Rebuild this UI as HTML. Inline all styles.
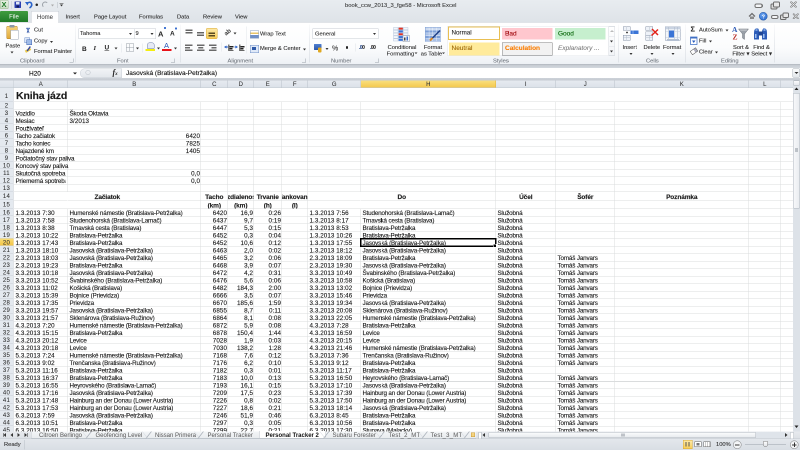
<!DOCTYPE html>
<html><head><meta charset="utf-8"><title>Excel</title>
<style>
html,body{margin:0;padding:0;width:800px;height:450px;overflow:hidden;background:#fff}
#root{position:absolute;left:0;top:0;width:1600px;height:900px;transform:scale(0.5);will-change:transform;transform-origin:0 0;overflow:hidden;background:#fff;font-family:"Liberation Sans",sans-serif;color:#000}
.a{position:absolute}
/* title + tabs */
#top{position:absolute;left:0;top:0;width:1600px;height:44px;background:linear-gradient(#e8ecf0,#dee3e8)}
#title{position:absolute;left:690px;top:3px;font-size:11.7px;color:#333;white-space:nowrap;-webkit-text-stroke:0.15px #333}
.tab{position:absolute;top:27px;font-size:11.5px;color:#2b2b2b;white-space:nowrap;-webkit-text-stroke:0.2px #2b2b2b}
#filetab{position:absolute;left:0;top:22px;width:56px;height:22px;background:linear-gradient(#3f9c3f,#1f7a28);color:#fff;font-size:12px;text-align:center;line-height:23px;border-radius:2px 2px 0 0}
#hometab{position:absolute;left:62px;top:22px;width:54px;height:23px;background:linear-gradient(#fdfdfe,#ffffff);border:1px solid #c3c9d1;border-bottom:none;border-radius:3px 3px 0 0;font-size:12px;color:#333;text-align:center;line-height:23px;z-index:2}
/* ribbon */
#ribbon{position:absolute;left:0;top:44px;width:1600px;height:84px;background:linear-gradient(#ffffff 0%,#fbfcfd 60%,#eef1f5 100%);border-top:1px solid #c3c9d1;box-sizing:border-box}
#ribbon .sep{position:absolute;top:4px;width:1px;height:76px;background:linear-gradient(#f4f5f7,#d6dbe1,#d0d5dc)}
.gl{position:absolute;top:70px;font-size:11.5px;color:#6f757d;white-space:nowrap;-webkit-text-stroke:0.15px #6f757d}
.t{position:absolute;font-size:11.5px;color:#2b2b2b;white-space:nowrap;-webkit-text-stroke:0.2px #2b2b2b}
.dd{position:absolute;width:0;height:0;border-left:3px solid transparent;border-right:3px solid transparent;border-top:4px solid #333}
.dl{position:absolute;width:7px;height:7px;border-right:1px solid #9aa1aa;border-bottom:1px solid #9aa1aa}
.box{position:absolute;background:#fff;border:1px solid #c7ccd3;box-sizing:border-box}
#band1{position:absolute;left:0;top:128px;width:1600px;height:8px;background:linear-gradient(#adb3bb,#c6cbd2 30%,#d3d8de)}
#fbar{position:absolute;left:0;top:136px;width:1600px;height:20px;background:#fff}
#band2{position:absolute;left:0;top:156px;width:1600px;height:5px;background:linear-gradient(#cdd2d9,#c4cad1)}
/* sheet */
#grid{position:absolute;left:0;top:0;width:1586px;height:863px;overflow:hidden}
.hl{position:absolute;left:28px;width:1560px;height:1px;background:#dadcdd}
.vl{position:absolute;top:176px;height:700px;width:1px;background:#dadcdd}
.c{position:absolute;font-size:12.5px;letter-spacing:-0.27px;line-height:15px;padding-top:2px;box-sizing:border-box;white-space:nowrap;color:#1a1a1a;-webkit-text-stroke:0.25px #1a1a1a}
.n{letter-spacing:.15px}
.b{font-weight:bold;line-height:17px;font-size:13px;letter-spacing:-0.2px}
.title{font-size:21px;font-weight:bold;line-height:27px;padding-top:1px}
#colhdr{position:absolute;left:0;top:161px;width:1586px;height:15px;background:linear-gradient(#e6eaf0,#dce2e9);border-bottom:1px solid #c0c7cf;box-sizing:border-box}
.ch{position:absolute;top:0;height:14px;border-right:1px solid #b9c0c9;text-align:center;font-size:12px;line-height:15px;color:#333;-webkit-text-stroke:0.1px #333}
.ch.sel{background:linear-gradient(#f9df80,#f4c84c);border-right-color:#e2b33a;color:#333}
.corner{position:absolute;left:0;top:0;width:27px;height:14px;border-right:1px solid #c5cbd2}
#rowhdr{position:absolute;left:0;top:0;width:28px;height:863px;overflow:hidden}
.rh{position:absolute;left:0;width:27px;background:#e4e9ef;border-right:1px solid #c0c7cf;border-bottom:1px solid #c9cfd6;text-align:center;font-size:12px;letter-spacing:.5px;color:#2e2e2e;-webkit-text-stroke:0.1px #2e2e2e}
#rowhdr .rh{margin-top:0;padding-top:0}
.rh.sel{background:linear-gradient(#f9dd78,#f4c444);border-right-color:#e2b33a;color:#333}
.selbox{position:absolute;border:3px solid #000;box-sizing:content-box}
/* bottom */
#tabbar{position:absolute;left:0;top:863px;width:1600px;height:14px;background:linear-gradient(#e7eaee,#dde1e6)}
.st{position:absolute;top:0;height:14px;font-size:12px;line-height:14px;color:#555;white-space:nowrap}
#status{position:absolute;left:0;top:877px;width:1600px;height:23px;background:linear-gradient(#e3e7ec,#d9dee4);border-top:1px solid #c5cbd2;box-sizing:border-box}
#vscroll{position:absolute;left:1586px;top:161px;width:14px;height:702px;background:#dde2e8}

.ctr{position:absolute;left:50%;transform:translateX(-50%);white-space:nowrap}

</style></head><body><div id="root">
<div id="top">
  <!-- excel icon -->
  <div class="a" style="left:0;top:0;width:17px;height:18px;background:linear-gradient(#e9f3e6,#c7dcc1);border:1px solid #9db894;box-sizing:border-box;border-radius:2px"></div>
  <div class="a" style="left:3px;top:0px;font-size:15px;font-weight:bold;color:#1f7a28;line-height:18px">X</div>
  <div class="a" style="left:22px;top:2px;width:1px;height:16px;background:#c0c6cd"></div>
  <!-- save -->
  <div class="a" style="left:29px;top:3px;width:13px;height:13px;background:#2b3fb0;border-radius:1px"></div>
  <div class="a" style="left:32px;top:4px;width:7px;height:5px;background:#dfe6f5"></div>
  <div class="a" style="left:33px;top:11px;width:5px;height:4px;background:#121a55"></div>
  <!-- undo -->
  <svg class="a" style="left:50px;top:1px" width="18" height="18" viewBox="0 0 18 18"><path d="M4 6 Q10 1 13 6 Q15 11 9 15" stroke="#2a62c9" stroke-width="3.2" fill="none"/><path d="M0 3 L8 3 L5 10 Z" fill="#2a62c9"/></svg>
  <div class="a" style="left:71px;top:7px;width:5px;height:5px;border-radius:50%;background:#222"></div>
  <!-- redo -->
  <div class="a" style="left:84px;top:3px;width:9px;height:9px;border:2px solid #9aa0a7;border-right-color:transparent;border-bottom-color:transparent;border-radius:50%"></div>
  <div class="dd" style="left:102px;top:9px;border-top-color:#aaa"></div>
  <div class="a" style="left:114px;top:4px;width:1px;height:12px;background:#b5bbc2"></div>
  <div class="a" style="left:119px;top:6px;width:8px;height:1px;background:#333"></div>
  <div class="dd" style="left:120px;top:9px;border-top-color:#333"></div>
  <div id="title">book_ccw_2013_3_fge58 - Microsoft Excel</div>
  <!-- window buttons row1 -->
  <div class="a" style="left:1509px;top:7px;width:12px;height:5px;border:2px solid #707070;border-radius:4px;background:#f4f5f7"></div>
  <div class="a" style="left:1541px;top:7px;width:10px;height:8px;border:2px solid #6a6a6a;border-radius:3px;background:#d8d8d8"></div>
  <div class="a" style="left:1546px;top:3px;width:10px;height:8px;border:2px solid #6a6a6a;border-radius:3px;background:#e8e8e8"></div>
  <svg class="a" style="left:1580px;top:3px" width="14" height="12" viewBox="0 0 18 16"><path d="M3 2 L15 14 M15 2 L3 14" stroke="#6a6a6a" stroke-width="5" stroke-linecap="round"/><path d="M3 2 L15 14 M15 2 L3 14" stroke="#eef0f2" stroke-width="2" stroke-linecap="round"/></svg>
  <!-- row2 -->
  <svg class="a" style="left:1497px;top:25px" width="14" height="14" viewBox="0 0 14 14"><path d="M1 8 L7 2 L13 8" stroke="#6f6f6f" stroke-width="2.5" fill="none"/><rect x="3" y="8" width="8" height="5" fill="#8a8a8a"/></svg>
  <div class="a" style="left:1518px;top:24px;width:17px;height:17px;border-radius:50%;background:radial-gradient(circle at 40% 35%,#6aa4ef,#1f5fc6);border:1px solid #184d9c;box-sizing:border-box;color:#fff;font-size:11px;font-weight:bold;text-align:center;line-height:16px">?</div>
  <div class="a" style="left:1542px;top:30px;width:11px;height:4px;border:2px solid #707070;border-radius:4px;background:#f4f5f7"></div>
  <div class="a" style="left:1560px;top:29px;width:9px;height:7px;border:2px solid #6a6a6a;border-radius:3px;background:#d8d8d8"></div>
  <div class="a" style="left:1565px;top:25px;width:9px;height:7px;border:2px solid #6a6a6a;border-radius:3px;background:#e8e8e8"></div>
  <svg class="a" style="left:1585px;top:27px" width="13" height="11" viewBox="0 0 18 16"><path d="M3 2 L15 14 M15 2 L3 14" stroke="#6a6a6a" stroke-width="5" stroke-linecap="round"/><path d="M3 2 L15 14 M15 2 L3 14" stroke="#eef0f2" stroke-width="2" stroke-linecap="round"/></svg>
</div>
<div id="filetab">File</div>
<div id="hometab">Home</div>
<div class="tab" style="left:131px">Insert</div>
<div class="tab" style="left:188px">Page Layout</div>
<div class="tab" style="left:278px">Formulas</div>
<div class="tab" style="left:354px">Data</div>
<div class="tab" style="left:406px">Review</div>
<div class="tab" style="left:470px">View</div>

<div id="ribbon">
  <!-- CLIPBOARD -->
  <div class="a" style="left:13px;top:7px;width:22px;height:26px;background:linear-gradient(#f6d27a,#e0a93a);border:1px solid #b8872c;border-radius:2px;box-sizing:border-box"></div>
  <div class="a" style="left:19px;top:5px;width:10px;height:5px;background:#8b98a8;border-radius:1px"></div>
  <div class="a" style="left:21px;top:15px;width:16px;height:19px;background:#fff;border:1px solid #9aa5b3;box-sizing:border-box"></div>
  <div class="t" style="left:11px;top:40px">Paste</div>
  <div class="dd" style="left:21px;top:58px"></div>
  <div class="a" style="left:50px;top:9px;font-size:14px;color:#2f55a8;line-height:14px;transform:rotate(90deg);-webkit-text-stroke:0.6px #2f55a8">&#x2702;</div>
  <div class="t" style="left:68px;top:8px">Cut</div>
  <div class="a" style="left:49px;top:30px;width:9px;height:9px;border:1px solid #6d8fc8;background:#dbe6f7"></div>
  <div class="a" style="left:53px;top:34px;width:9px;height:9px;border:1px solid #3e64b2;background:#9fbbe8"></div>
  <div class="t" style="left:68px;top:30px">Copy</div>
  <div class="dd" style="left:100px;top:37px"></div>
  <div class="a" style="left:50px;top:53px;width:12px;height:5px;background:#e9c84a;transform:rotate(-30deg)"></div>
  <div class="a" style="left:56px;top:47px;width:3px;height:11px;background:#3a4a9a;transform:rotate(35deg)"></div>
  <div class="t" style="left:68px;top:51px">Format Painter</div>
  <div class="gl" style="left:40px">Clipboard</div>
  <div class="dl" style="left:139px;top:72px"></div>
  <div class="sep" style="left:151px"></div>

  <!-- FONT -->
  <div class="box" style="left:157px;top:12px;width:112px;height:21px"></div>
  <div class="box" style="left:268px;top:12px;width:44px;height:21px"></div>
  <div class="t" style="left:160px;top:15px">Tahoma</div>
  <div class="t" style="left:271px;top:15px">9</div>
  <div class="dd" style="left:258px;top:21px"></div>
  <div class="dd" style="left:301px;top:21px"></div>
  <div class="a" style="left:316px;top:13px;font-size:15px;font-weight:bold;color:#222;line-height:20px">A</div>
  <div class="a" style="left:328px;top:9px;width:4px;height:4px;background:#3a6fd0;border-radius:1px"></div>
  <div class="a" style="left:340px;top:14px;font-size:13px;font-weight:bold;color:#222;line-height:16px">A</div>
  <div class="a" style="left:350px;top:10px;width:4px;height:4px;background:#3a6fd0;border-radius:1px"></div>
  <div class="a" style="left:164px;top:45px;font-size:13px;font-weight:bold;color:#222">B</div>
  <div class="a" style="left:187px;top:43px;font-size:13px;font-style:italic;font-weight:bold;color:#222;font-family:'Liberation Serif',serif">I</div>
  <div class="a" style="left:209px;top:42px;font-size:13px;text-decoration:underline;font-weight:bold;color:#222">U</div>
  <div class="dd" style="left:229px;top:50px"></div>
  <div class="a" style="left:242px;top:42px;width:1px;height:18px;background:#dde1e6"></div>
  <div class="a" style="left:252px;top:42px;width:14px;height:14px;border:1px solid #9aa1a9;background:linear-gradient(90deg,transparent 6px,#9aa1a9 6px,#9aa1a9 7px,transparent 7px),linear-gradient(transparent 6px,#9aa1a9 6px,#9aa1a9 7px,transparent 7px)"></div>
  <div class="dd" style="left:272px;top:50px"></div>
  <div class="a" style="left:284px;top:42px;width:1px;height:18px;background:#dde1e6"></div>
  <div class="a" style="left:294px;top:40px;width:13px;height:11px;border:1px solid #6c7fa8;border-radius:5px 5px 2px 2px;background:#e6eaf4"></div>
  <div class="a" style="left:291px;top:53px;width:19px;height:4px;background:#f4ee10"></div>
  <div class="dd" style="left:314px;top:50px"></div>
  <div class="a" style="left:328px;top:38px;font-size:15px;color:#2453b6;line-height:16px">A</div>
  <div class="a" style="left:324px;top:53px;width:19px;height:4px;background:#e8131a"></div>
  <div class="dd" style="left:348px;top:50px"></div>
  <div class="gl" style="left:234px">Font</div>
  <div class="dl" style="left:342px;top:72px"></div>
  <div class="sep" style="left:360px"></div>

  <!-- ALIGNMENT -->
  <div class="a" style="left:371px;top:14px;width:14px;height:8px;background:linear-gradient(#666 0,#666 3px,transparent 3px,transparent 5px,#666 5px)"></div>
  <div class="a" style="left:394px;top:19px;width:14px;height:8px;background:linear-gradient(#666 0,#666 3px,transparent 3px,transparent 5px,#666 5px)"></div>
  <div class="a" style="left:412px;top:11px;width:23px;height:22px;background:linear-gradient(#fde9a8,#f7cd59);border:1px solid #d8a936;border-radius:3px;box-sizing:border-box"></div>
  <div class="a" style="left:417px;top:20px;width:13px;height:8px;background:linear-gradient(#5a4a20 0,#5a4a20 3px,transparent 3px,transparent 5px,#5a4a20 5px)"></div>
  <div class="a" style="left:448px;top:12px;font-size:12px;font-weight:bold;color:#333;transform:rotate(-40deg)">ab</div>
  <div class="dd" style="left:467px;top:20px"></div>
  <svg class="a" style="left:370px;top:44px" width="16" height="14" viewBox="0 0 16 14"><rect x="0" y="0" width="15" height="3" fill="#6a6a6a"/><rect x="0" y="5" width="10" height="3" fill="#6a6a6a"/><rect x="0" y="10" width="15" height="3" fill="#6a6a6a"/></svg>
  <svg class="a" style="left:394px;top:44px" width="16" height="14" viewBox="0 0 16 14"><rect x="0" y="0" width="15" height="3" fill="#6a6a6a"/><rect x="2.5" y="5" width="10" height="3" fill="#6a6a6a"/><rect x="0" y="10" width="15" height="3" fill="#6a6a6a"/></svg>
  <svg class="a" style="left:418px;top:44px" width="16" height="14" viewBox="0 0 16 14"><rect x="0" y="0" width="15" height="3" fill="#6a6a6a"/><rect x="5" y="5" width="10" height="3" fill="#6a6a6a"/><rect x="0" y="10" width="15" height="3" fill="#6a6a6a"/></svg>
  <div class="a" style="left:442px;top:40px;width:1px;height:18px;background:#dde1e6"></div>
  <svg class="a" style="left:455px;top:44px" width="12" height="14" viewBox="0 0 12 14"><rect x="1" y="0" width="3" height="13" fill="#777"/><rect x="4" y="3" width="8" height="3" fill="#222"/><rect x="4" y="7" width="6" height="3" fill="#222"/><rect x="3" y="11" width="9" height="2" fill="#666"/></svg><div class="a" style="left:448px;top:46px;width:0;height:0;border-top:3px solid transparent;border-bottom:3px solid transparent;border-right:5px solid #2b62c8"></div><div class="a" style="left:451px;top:48px;width:5px;height:2px;background:#2b62c8"></div>
  <svg class="a" style="left:477px;top:44px" width="12" height="14" viewBox="0 0 12 14"><rect x="1" y="0" width="3" height="13" fill="#777"/><rect x="4" y="3" width="8" height="3" fill="#222"/><rect x="4" y="7" width="6" height="3" fill="#222"/><rect x="3" y="11" width="9" height="2" fill="#666"/></svg><div class="a" style="left:471px;top:46px;width:0;height:0;border-top:3px solid transparent;border-bottom:3px solid transparent;border-left:5px solid #2b62c8"></div><div class="a" style="left:469px;top:48px;width:4px;height:2px;background:#2b62c8"></div>
  <div class="a" style="left:492px;top:8px;width:1px;height:54px;background:#e1e5ea"></div>
  <div class="a" style="left:500px;top:16px;width:16px;height:14px;border:1px solid #8aa0c0;background:linear-gradient(#fff 0,#fff 3px,#e8c56a 3px,#e8c56a 6px,#fff 6px,#fff 8px,#6f8fc6 8px)"></div>
  <div class="t" style="left:520px;top:16px">Wrap Text</div>
  <div class="a" style="left:500px;top:45px;width:16px;height:14px;border:1px solid #6f8fc6;background:#dfe9f8"></div>
  <div class="a" style="left:504px;top:49px;width:8px;height:6px;background:#2d59a8"></div>
  <div class="t" style="left:520px;top:45px">Merge &amp; Center</div>
  <div class="dd" style="left:606px;top:52px"></div>
  <div class="gl" style="left:455px">Alignment</div>
  <div class="dl" style="left:604px;top:72px"></div>
  <div class="sep" style="left:619px"></div>

  <!-- NUMBER -->
  <div class="box" style="left:625px;top:12px;width:132px;height:21px"></div>
  <div class="t" style="left:630px;top:16px">General</div>
  <div class="dd" style="left:746px;top:21px"></div>
  <div class="a" style="left:628px;top:43px;width:15px;height:12px;background:linear-gradient(#4f7fd0,#2b56a8);border-radius:1px"></div>
  <div class="a" style="left:636px;top:50px;width:7px;height:10px;background:#e0a820;border-radius:2px"></div>
  <div class="dd" style="left:651px;top:51px"></div>
  <div class="t" style="left:664px;top:43px;font-size:14px;color:#444">%</div>
  <div class="a" style="left:692px;top:47px;width:4px;height:6px;background:#222;border-radius:2px"></div>
  <div class="a" style="left:710px;top:42px;width:1px;height:16px;background:#dde1e6"></div>
  <div class="t" style="left:718px;top:44px;font-size:10px;color:#2b56a8;font-weight:bold;letter-spacing:-1px">.0<span style="color:#333">0</span></div>
  <div class="t" style="left:740px;top:44px;font-size:10px;color:#2b56a8;font-weight:bold;letter-spacing:-1px">.<span style="color:#333">00</span></div>
  <div class="gl" style="left:662px">Number</div>
  <div class="dl" style="left:750px;top:72px"></div>
  <div class="sep" style="left:763px"></div>

  <!-- STYLES -->
  <svg class="a" style="left:786px;top:9px" width="34" height="30" viewBox="0 0 34 30"><rect x="1" y="1.0" width="9" height="4.6" fill="#f4f7fb" stroke="#a9bcd8" stroke-width="0.8"/><rect x="11" y="1.0" width="9" height="4.6" fill="#e8311f" stroke="#a9bcd8" stroke-width="0.8"/><rect x="21" y="1.0" width="9" height="4.6" fill="#f4f7fb" stroke="#a9bcd8" stroke-width="0.8"/><rect x="1" y="6.6" width="9" height="4.6" fill="#f4f7fb" stroke="#a9bcd8" stroke-width="0.8"/><rect x="11" y="6.6" width="9" height="4.6" fill="#3a72d8" stroke="#a9bcd8" stroke-width="0.8"/><rect x="21" y="6.6" width="9" height="4.6" fill="#f4f7fb" stroke="#a9bcd8" stroke-width="0.8"/><rect x="1" y="12.2" width="9" height="4.6" fill="#f4f7fb" stroke="#a9bcd8" stroke-width="0.8"/><rect x="11" y="12.2" width="9" height="4.6" fill="#e8311f" stroke="#a9bcd8" stroke-width="0.8"/><rect x="21" y="12.2" width="9" height="4.6" fill="#f4f7fb" stroke="#a9bcd8" stroke-width="0.8"/><rect x="1" y="17.8" width="9" height="4.6" fill="#f4f7fb" stroke="#a9bcd8" stroke-width="0.8"/><rect x="11" y="17.8" width="9" height="4.6" fill="#3a72d8" stroke="#a9bcd8" stroke-width="0.8"/><rect x="21" y="17.8" width="9" height="4.6" fill="#f4f7fb" stroke="#a9bcd8" stroke-width="0.8"/><rect x="1" y="23.4" width="9" height="4.6" fill="#f4f7fb" stroke="#a9bcd8" stroke-width="0.8"/><rect x="11" y="23.4" width="9" height="4.6" fill="#3a72d8" stroke="#a9bcd8" stroke-width="0.8"/><rect x="21" y="23.4" width="9" height="4.6" fill="#f4f7fb" stroke="#a9bcd8" stroke-width="0.8"/><rect x="20" y="17" width="13" height="12" fill="#f6f7f9" stroke="#8c96a6" stroke-width="1"/><rect x="22" y="21" width="3" height="6" fill="#444"/><rect x="27" y="19" width="3" height="8" fill="#3b6fc8"/></svg>
  <div class="t" style="left:771px;top:43px;text-align:center;width:66px;line-height:13px">Conditional<br>Formatting&nbsp;&nbsp;</div>
  <div class="dd" style="left:829px;top:60px;border-width:3px 3px 0 3px"></div>
  <svg class="a" style="left:850px;top:9px" width="34" height="30" viewBox="0 0 34 30"><rect x="0.5" y="0.5" width="31" height="28.5" fill="#fff" stroke="#7f9fd4" stroke-width="1"/><rect x="1.0" y="1.0" width="6.8" height="4.8" fill="#c9d8ef"/><rect x="8.5" y="1.0" width="6.8" height="4.8" fill="#c9d8ef"/><rect x="16.0" y="1.0" width="6.8" height="4.8" fill="#c9d8ef"/><rect x="23.5" y="1.0" width="6.8" height="4.8" fill="#c9d8ef"/><rect x="1.0" y="6.6" width="6.8" height="4.8" fill="#7ea0d8"/><rect x="8.5" y="6.6" width="6.8" height="4.8" fill="#7ea0d8"/><rect x="16.0" y="6.6" width="6.8" height="4.8" fill="#7ea0d8"/><rect x="23.5" y="6.6" width="6.8" height="4.8" fill="#7ea0d8"/><rect x="1.0" y="12.2" width="6.8" height="4.8" fill="#a9c0e6"/><rect x="8.5" y="12.2" width="6.8" height="4.8" fill="#a9c0e6"/><rect x="16.0" y="12.2" width="6.8" height="4.8" fill="#a9c0e6"/><rect x="23.5" y="12.2" width="6.8" height="4.8" fill="#a9c0e6"/><rect x="1.0" y="17.8" width="6.8" height="4.8" fill="#7ea0d8"/><rect x="8.5" y="17.8" width="6.8" height="4.8" fill="#7ea0d8"/><rect x="16.0" y="17.8" width="6.8" height="4.8" fill="#7ea0d8"/><rect x="23.5" y="17.8" width="6.8" height="4.8" fill="#7ea0d8"/><rect x="1.0" y="23.4" width="6.8" height="4.8" fill="#a9c0e6"/><rect x="8.5" y="23.4" width="6.8" height="4.8" fill="#a9c0e6"/><rect x="16.0" y="23.4" width="6.8" height="4.8" fill="#a9c0e6"/><rect x="23.5" y="23.4" width="6.8" height="4.8" fill="#a9c0e6"/><path d="M10 27 L30 7" stroke="#1f3f86" stroke-width="3"/><path d="M10 27 L15 22" stroke="#d98a2b" stroke-width="4"/></svg>
  <div class="t" style="left:838px;top:43px;text-align:center;width:56px;line-height:13px">Format<br>as Table&nbsp;&nbsp;</div>
  <div class="dd" style="left:884px;top:60px;border-width:3px 3px 0 3px"></div>
  <div class="a" style="left:895px;top:7px;width:335px;height:60px;border:1px solid #e3e6ea;box-sizing:border-box;background:#fff"></div>
  <div class="a" style="left:896px;top:8px;width:104px;height:27px;border:2px solid #e9bf52;box-sizing:border-box;background:#fff"></div>
  <div class="t" style="left:903px;top:13px;color:#222;font-size:12.5px">Normal</div>
  <div class="a" style="left:1004px;top:11px;width:101px;height:23px;background:#ffc7ce"></div>
  <div class="t" style="left:1010px;top:14px;color:#9c0006;-webkit-text-stroke-color:#9c0006;font-size:13px">Bad</div>
  <div class="a" style="left:1110px;top:11px;width:101px;height:23px;background:#c6efce"></div>
  <div class="t" style="left:1116px;top:14px;color:#006100;-webkit-text-stroke-color:#006100;font-size:13px">Good</div>
  <div class="a" style="left:898px;top:40px;width:101px;height:26px;background:#ffeb9c"></div>
  <div class="t" style="left:903px;top:43px;color:#9c6500;-webkit-text-stroke-color:#9c6500;font-size:13px">Neutral</div>
  <div class="a" style="left:1004px;top:40px;width:101px;height:26px;background:#f2f2f2;border:1px solid #7f7f7f;box-sizing:border-box"></div>
  <div class="t" style="left:1010px;top:43px;color:#fa7d00;-webkit-text-stroke-color:#fa7d00;font-size:13px;font-weight:bold">Calculation</div>
  <div class="t" style="left:1116px;top:43px;color:#7f7f7f;-webkit-text-stroke-color:#7f7f7f;font-size:13px;font-style:italic">Explanatory ...</div>
  <div class="a" style="left:1217px;top:8px;width:13px;height:58px;border:1px solid #d5d9df;box-sizing:border-box;background:linear-gradient(#fff,#f2f4f7)"></div>
  <div class="a" style="left:1217px;top:27px;width:13px;height:1px;background:#dde1e6"></div><div class="a" style="left:1217px;top:47px;width:13px;height:1px;background:#dde1e6"></div><div class="a" style="left:1220px;top:15px;width:0;height:0;border-left:4px solid transparent;border-right:4px solid transparent;border-bottom:4px solid #bbb"></div><div class="dd" style="left:1220px;top:36px"></div>
  <div class="dd" style="left:1220px;top:56px"></div>
  <div class="gl" style="left:986px">Styles</div>
  <div class="sep" style="left:1236px"></div>

  <!-- CELLS -->
  <svg class="a" style="left:1244px;top:6px" width="36" height="32" viewBox="0 0 36 32"><rect x="2.5" y="2.5" width="14" height="7" fill="#eef2f8" stroke="#8794a8"/><line x1="9.5" y1="2.5" x2="9.5" y2="9.5" stroke="#b5bfcc"/><circle cx="10" cy="14" r="1.8" fill="#222"/><rect x="17" y="10" width="16" height="7" fill="#3a74d6"/><line x1="22" y1="10" x2="22" y2="17" stroke="#cfe0fa"/><line x1="27.5" y1="10" x2="27.5" y2="17" stroke="#cfe0fa"/><rect x="2.5" y="19.5" width="14" height="10" fill="#eef2f8" stroke="#8794a8"/><line x1="9.5" y1="19.5" x2="9.5" y2="29.5" stroke="#b5bfcc"/><line x1="2.5" y1="24.5" x2="16.5" y2="24.5" stroke="#b5bfcc"/></svg>
  <div class="t" style="left:1245px;top:43px">Insert</div>
  <div class="dd" style="left:1259px;top:61px"></div>
  <svg class="a" style="left:1289px;top:6px" width="30" height="32" viewBox="0 0 30 32"><rect x="2.5" y="2.5" width="14" height="7" fill="#eef2f8" stroke="#8794a8"/><line x1="9.5" y1="2.5" x2="9.5" y2="9.5" stroke="#b5bfcc"/><rect x="2.5" y="12.5" width="14" height="7" fill="#eef2f8" stroke="#9aa5b5"/><rect x="2.5" y="19.5" width="14" height="10" fill="#eef2f8" stroke="#8794a8"/><line x1="9.5" y1="19.5" x2="9.5" y2="29.5" stroke="#b5bfcc"/><line x1="2.5" y1="24.5" x2="16.5" y2="24.5" stroke="#b5bfcc"/><path d="M15 7 L27 19 M27 8 L14 20" stroke="#e2231a" stroke-width="3"/></svg>
  <div class="t" style="left:1287px;top:43px">Delete</div>
  <div class="dd" style="left:1301px;top:61px"></div>
  <svg class="a" style="left:1329px;top:7px" width="34" height="31" viewBox="0 0 34 31"><rect x="1.5" y="1.5" width="30" height="27" fill="#f3f6fa" stroke="#8d9ab0"/><rect x="1.5" y="1.5" width="30" height="5" fill="#c9d3e2"/><line x1="8.5" y1="1.5" x2="8.5" y2="28.5" stroke="#aab6c8"/><line x1="19.5" y1="1.5" x2="19.5" y2="28.5" stroke="#aab6c8"/><line x1="25.5" y1="1.5" x2="25.5" y2="28.5" stroke="#aab6c8"/><line x1="1.5" y1="11.5" x2="31.5" y2="11.5" stroke="#c3cddc"/><line x1="1.5" y1="22.5" x2="31.5" y2="22.5" stroke="#c3cddc"/><rect x="9" y="9" width="10" height="14" fill="#3a74d6"/><rect x="5" y="26" width="24" height="4" fill="#b4c0d2"/></svg>
  <div class="t" style="left:1326px;top:43px">Format</div>
  <div class="dd" style="left:1343px;top:61px"></div>
  <div class="gl" style="left:1292px">Cells</div>
  <div class="sep" style="left:1370px"></div>

  <!-- EDITING -->
  <div class="a" style="left:1381px;top:4px;font-size:15px;font-weight:bold;color:#222;line-height:18px">&#x3A3;</div>
  <div class="t" style="left:1398px;top:8px">AutoSum</div>
  <div class="dd" style="left:1451px;top:14px"></div>
  <svg class="a" style="left:1380px;top:28px" width="16" height="17" viewBox="0 0 16 17"><rect x="1" y="1" width="13" height="15" fill="#fff" stroke="#3f6fc4" stroke-width="1.5"/><rect x="1" y="1" width="13" height="3" fill="#3f6fc4"/><path d="M4 8 L11 8 L7.5 13 Z" fill="#2b5fc0"/></svg>
  <div class="t" style="left:1398px;top:30px">Fill</div>
  <div class="dd" style="left:1418px;top:36px"></div>
  <div class="a" style="left:1381px;top:53px;width:12px;height:7px;border:1px solid #555;background:linear-gradient(90deg,#fff 60%,#aab 60%);transform:rotate(-35deg)"></div>
  <div class="t" style="left:1398px;top:52px">Clear</div>
  <div class="dd" style="left:1430px;top:58px"></div>
  <div class="a" style="left:1464px;top:7px;font-size:15px;font-weight:bold;color:#2e5bb5;line-height:14px;font-family:'Liberation Serif',serif">A</div>
  <div class="a" style="left:1465px;top:22px;font-size:15px;font-weight:bold;color:#b8302a;line-height:14px;font-family:'Liberation Serif',serif">Z</div>
  <svg class="a" style="left:1476px;top:11px" width="22" height="24" viewBox="0 0 22 24"><path d="M1 2 L21 2 L13 12 L13 23 L9 20 L9 12 Z" fill="#9aa0a8" stroke="#6f757d" stroke-width="1"/><path d="M3 3 L19 3 L17 5 L5 5 Z" fill="#d5d8dc"/></svg>
  
  <div class="t" style="left:1462px;top:43px;text-align:center;width:40px;line-height:13px">Sort &amp;<br>Filter &#x25BE;</div>
  <svg class="a" style="left:1506px;top:9px" width="30" height="26" viewBox="0 0 30 26"><path d="M2 12 Q2 4 6 3 L10 3 Q12 4 12 10 L12 25 L2 25 Z" fill="#2c5cb8"/><path d="M18 10 Q18 4 20 3 L24 3 Q28 4 28 12 L28 25 L18 25 Z" fill="#2c5cb8"/><rect x="11" y="9" width="8" height="8" fill="#1f4796"/><rect x="4" y="14" width="3" height="8" fill="#9fc0f0"/><rect x="20" y="14" width="3" height="8" fill="#9fc0f0"/><rect x="5" y="4" width="4" height="4" fill="#7aa2e0"/><rect x="21" y="4" width="4" height="4" fill="#7aa2e0"/></svg>
  
  
  <div class="t" style="left:1502px;top:43px;text-align:center;width:42px;line-height:13px">Find &amp;<br>Select &#x25BE;</div>
  <div class="gl" style="left:1442px">Editing</div>
  <div class="sep" style="left:1548px"></div>
</div>
<div id="band1"></div>
<div id="fbar">
  
  <div class="t" style="left:58px;top:3px;color:#111;font-size:13px;-webkit-text-stroke:0.3px #111">H20</div>
  <div class="dd" style="left:146px;top:9px;border-left-width:4px;border-right-width:4px;border-top-width:4px;border-top-color:#222"></div>
  <div class="a" style="left:160px;top:1px;width:84px;height:19px;background:linear-gradient(#f1f3f6,#e3e7ec);border-radius:9px 0 0 9px;border:1px solid #c9ced5;box-sizing:border-box"></div>
  <div class="a" style="left:171px;top:4px;width:8px;height:8px;border:1px solid #b8bec6;border-radius:50%"></div>
  <div class="a" style="left:225px;top:0px;font-size:16px;font-style:italic;font-weight:bold;color:#222;font-family:'Liberation Serif',serif">f<span style="font-size:10px">x</span></div>
  <div class="t" style="left:252px;top:2px;color:#111;font-size:13px;-webkit-text-stroke:0.25px #111">Jasovská (Bratislava-Petržalka)</div>
  <div class="a" style="left:1585px;top:1px;width:15px;height:18px;border:1px solid #a9b0b8;background:linear-gradient(#fafbfc,#e4e8ec);box-sizing:border-box;border-radius:2px"></div>
  <div class="dd" style="left:1589px;top:8px;border-left-width:4px;border-right-width:4px;border-top-width:4px;border-top-color:#333"></div>
</div>
<div id="band2"></div>

<div id="sheet">
<div id="grid"><div class="hl" style="top:203px"></div><div class="hl" style="top:218px"></div><div class="hl" style="top:233px"></div><div class="hl" style="top:248px"></div><div class="hl" style="top:263px"></div><div class="hl" style="top:278px"></div><div class="hl" style="top:293px"></div><div class="hl" style="top:308px"></div><div class="hl" style="top:323px"></div><div class="hl" style="top:338px"></div><div class="hl" style="top:353px"></div><div class="hl" style="top:368px"></div><div class="hl" style="top:383px"></div><div class="hl" style="top:400px"></div><div class="hl" style="top:417px"></div><div class="hl" style="top:432px"></div><div class="hl" style="top:447px"></div><div class="hl" style="top:462px"></div><div class="hl" style="top:477px"></div><div class="hl" style="top:492px"></div><div class="hl" style="top:507px"></div><div class="hl" style="top:522px"></div><div class="hl" style="top:537px"></div><div class="hl" style="top:552px"></div><div class="hl" style="top:567px"></div><div class="hl" style="top:582px"></div><div class="hl" style="top:597px"></div><div class="hl" style="top:612px"></div><div class="hl" style="top:627px"></div><div class="hl" style="top:642px"></div><div class="hl" style="top:657px"></div><div class="hl" style="top:672px"></div><div class="hl" style="top:687px"></div><div class="hl" style="top:702px"></div><div class="hl" style="top:717px"></div><div class="hl" style="top:732px"></div><div class="hl" style="top:747px"></div><div class="hl" style="top:762px"></div><div class="hl" style="top:777px"></div><div class="hl" style="top:792px"></div><div class="hl" style="top:807px"></div><div class="hl" style="top:822px"></div><div class="hl" style="top:837px"></div><div class="hl" style="top:852px"></div><div class="hl" style="top:867px"></div><div class="hl" style="top:882px"></div><div class="vl" style="left:135px"></div><div class="vl" style="left:401px"></div><div class="vl" style="left:455px"></div><div class="vl" style="left:507px"></div><div class="vl" style="left:563px"></div><div class="vl" style="left:615px"></div><div class="vl" style="left:721px"></div><div class="vl" style="left:991px"></div><div class="vl" style="left:1111px"></div><div class="vl" style="left:1229px"></div><div class="vl" style="left:1497px"></div><div class="vl" style="left:1561px"></div><div class="vl" style="left:1601px"></div><div class="a" style="left:28px;top:176px;width:1560px;height:27px;background:#fff"></div><div class="a" style="left:135px;top:384px;width:1px;height:33px;background:#fff"></div><div class="a" style="left:721px;top:384px;width:1px;height:33px;background:#fff"></div>
<div class="c title" style="top:176px;left:32px;height:27px">Kniha jázd</div><div class="c " style="top:218px;height:15px;left:31px;">Vozidlo</div><div class="c " style="top:218px;height:15px;left:139px;">Škoda Oktavia</div><div class="c " style="top:233px;height:15px;left:31px;">Mesiac</div><div class="c n" style="top:233px;height:15px;left:139px;">3/2013</div><div class="c " style="top:248px;height:15px;left:31px;">Používateľ</div><div class="c " style="top:263px;height:15px;left:31px;">Tacho začiatok</div><div class="c n" style="top:263px;height:15px;left:136px;width:264px;text-align:right;">6420</div><div class="c " style="top:278px;height:15px;left:31px;">Tacho koniec</div><div class="c n" style="top:278px;height:15px;left:136px;width:264px;text-align:right;">7825</div><div class="c " style="top:293px;height:15px;left:31px;">Najazdené km</div><div class="c n" style="top:293px;height:15px;left:136px;width:264px;text-align:right;">1405</div><div class="c " style="top:308px;height:15px;left:31px;">Počiatočný stav paliva</div><div class="c " style="top:323px;height:15px;left:31px;">Koncový stav paliva</div><div class="c " style="top:338px;height:15px;left:31px;width:100px;overflow:hidden;">Skutočná spotreba</div><div class="c n" style="top:338px;height:15px;left:136px;width:264px;text-align:right;">0,0</div><div class="c " style="top:353px;height:15px;left:31px;width:100px;overflow:hidden;">Priemerná spotreba</div><div class="c n" style="top:353px;height:15px;left:136px;width:264px;text-align:right;">0,0</div><div class="c b" style="top:383px;height:17px;left:28px;width:373px;overflow:hidden;"><span class="ctr">Začiatok</span></div><div class="c b" style="top:383px;height:17px;left:402px;width:53px;overflow:hidden;"><span class="ctr">Tacho</span></div><div class="c b" style="top:400px;height:17px;left:402px;width:53px;overflow:hidden;"><span class="ctr">(km)</span></div><div class="c b" style="top:383px;height:17px;left:456px;width:51px;overflow:hidden;"><span class="ctr">Vzdialenosť</span></div><div class="c b" style="top:400px;height:17px;left:456px;width:51px;overflow:hidden;"><span class="ctr">(km)</span></div><div class="c b" style="top:383px;height:17px;left:508px;width:55px;overflow:hidden;"><span class="ctr">Trvanie</span></div><div class="c b" style="top:400px;height:17px;left:508px;width:55px;overflow:hidden;"><span class="ctr">(h)</span></div><div class="c b" style="top:383px;height:17px;left:564px;width:51px;overflow:hidden;"><span class="ctr">Tankované</span></div><div class="c b" style="top:400px;height:17px;left:564px;width:51px;overflow:hidden;"><span class="ctr">(l)</span></div><div class="c b" style="top:383px;height:17px;left:616px;width:375px;overflow:hidden;"><span class="ctr">Do</span></div><div class="c b" style="top:383px;height:17px;left:992px;width:119px;overflow:hidden;"><span class="ctr">Účel</span></div><div class="c b" style="top:383px;height:17px;left:1112px;width:117px;overflow:hidden;"><span class="ctr">Šofér</span></div><div class="c b" style="top:383px;height:17px;left:1230px;width:267px;overflow:hidden;"><span class="ctr">Poznámka</span></div><div class="c n" style="top:417px;height:15px;left:31px;">1.3.2013 7:30</div><div class="c " style="top:417px;height:15px;left:139px;">Humenské námestie (Bratislava-Petržalka)</div><div class="c n" style="top:417px;height:15px;left:402px;width:52px;text-align:right;">6420</div><div class="c n" style="top:417px;height:15px;left:456px;width:50px;text-align:right;">16,9</div><div class="c n" style="top:417px;height:15px;left:508px;width:54px;text-align:right;">0:26</div><div class="c n" style="top:417px;height:15px;left:619px;">1.3.2013 7:56</div><div class="c " style="top:417px;height:15px;left:725px;">Studenohorská (Bratislava-Lamač)</div><div class="c " style="top:417px;height:15px;left:995px;">Služobná</div><div class="c n" style="top:432px;height:15px;left:31px;">1.3.2013 7:58</div><div class="c " style="top:432px;height:15px;left:139px;">Studenohorská (Bratislava-Lamač)</div><div class="c n" style="top:432px;height:15px;left:402px;width:52px;text-align:right;">6437</div><div class="c n" style="top:432px;height:15px;left:456px;width:50px;text-align:right;">9,7</div><div class="c n" style="top:432px;height:15px;left:508px;width:54px;text-align:right;">0:19</div><div class="c n" style="top:432px;height:15px;left:619px;">1.3.2013 8:17</div><div class="c " style="top:432px;height:15px;left:725px;">Trnavská cesta (Bratislava)</div><div class="c " style="top:432px;height:15px;left:995px;">Služobná</div><div class="c n" style="top:447px;height:15px;left:31px;">1.3.2013 8:38</div><div class="c " style="top:447px;height:15px;left:139px;">Trnavská cesta (Bratislava)</div><div class="c n" style="top:447px;height:15px;left:402px;width:52px;text-align:right;">6447</div><div class="c n" style="top:447px;height:15px;left:456px;width:50px;text-align:right;">5,3</div><div class="c n" style="top:447px;height:15px;left:508px;width:54px;text-align:right;">0:15</div><div class="c n" style="top:447px;height:15px;left:619px;">1.3.2013 8:53</div><div class="c " style="top:447px;height:15px;left:725px;">Bratislava-Petržalka</div><div class="c " style="top:447px;height:15px;left:995px;">Služobná</div><div class="c n" style="top:462px;height:15px;left:31px;">1.3.2013 10:22</div><div class="c " style="top:462px;height:15px;left:139px;">Bratislava-Petržalka</div><div class="c n" style="top:462px;height:15px;left:402px;width:52px;text-align:right;">6452</div><div class="c n" style="top:462px;height:15px;left:456px;width:50px;text-align:right;">0,3</div><div class="c n" style="top:462px;height:15px;left:508px;width:54px;text-align:right;">0:04</div><div class="c n" style="top:462px;height:15px;left:619px;">1.3.2013 10:26</div><div class="c " style="top:462px;height:15px;left:725px;">Bratislava-Petržalka</div><div class="c " style="top:462px;height:15px;left:995px;">Služobná</div><div class="c n" style="top:477px;height:15px;left:31px;">1.3.2013 17:43</div><div class="c " style="top:477px;height:15px;left:139px;">Bratislava-Petržalka</div><div class="c n" style="top:477px;height:15px;left:402px;width:52px;text-align:right;">6452</div><div class="c n" style="top:477px;height:15px;left:456px;width:50px;text-align:right;">10,6</div><div class="c n" style="top:477px;height:15px;left:508px;width:54px;text-align:right;">0:12</div><div class="c n" style="top:477px;height:15px;left:619px;">1.3.2013 17:55</div><div class="c " style="top:477px;height:15px;left:725px;">Jasovská (Bratislava-Petržalka)</div><div class="c " style="top:477px;height:15px;left:995px;">Služobná</div><div class="c n" style="top:492px;height:15px;left:31px;">1.3.2013 18:10</div><div class="c " style="top:492px;height:15px;left:139px;">Jasovská (Bratislava-Petržalka)</div><div class="c n" style="top:492px;height:15px;left:402px;width:52px;text-align:right;">6463</div><div class="c n" style="top:492px;height:15px;left:456px;width:50px;text-align:right;">2,0</div><div class="c n" style="top:492px;height:15px;left:508px;width:54px;text-align:right;">0:02</div><div class="c n" style="top:492px;height:15px;left:619px;">1.3.2013 18:12</div><div class="c " style="top:492px;height:15px;left:725px;">Jasovská (Bratislava-Petržalka)</div><div class="c " style="top:492px;height:15px;left:995px;">Služobná</div><div class="c n" style="top:507px;height:15px;left:31px;">2.3.2013 18:03</div><div class="c " style="top:507px;height:15px;left:139px;">Jasovská (Bratislava-Petržalka)</div><div class="c n" style="top:507px;height:15px;left:402px;width:52px;text-align:right;">6465</div><div class="c n" style="top:507px;height:15px;left:456px;width:50px;text-align:right;">3,2</div><div class="c n" style="top:507px;height:15px;left:508px;width:54px;text-align:right;">0:06</div><div class="c n" style="top:507px;height:15px;left:619px;">2.3.2013 18:09</div><div class="c " style="top:507px;height:15px;left:725px;">Bratislava-Petržalka</div><div class="c " style="top:507px;height:15px;left:995px;">Služobná</div><div class="c " style="top:507px;height:15px;left:1115px;">Tomáš Janvars</div><div class="c n" style="top:522px;height:15px;left:31px;">2.3.2013 19:23</div><div class="c " style="top:522px;height:15px;left:139px;">Bratislava-Petržalka</div><div class="c n" style="top:522px;height:15px;left:402px;width:52px;text-align:right;">6468</div><div class="c n" style="top:522px;height:15px;left:456px;width:50px;text-align:right;">3,9</div><div class="c n" style="top:522px;height:15px;left:508px;width:54px;text-align:right;">0:07</div><div class="c n" style="top:522px;height:15px;left:619px;">2.3.2013 19:30</div><div class="c " style="top:522px;height:15px;left:725px;">Jasovská (Bratislava-Petržalka)</div><div class="c " style="top:522px;height:15px;left:995px;">Služobná</div><div class="c " style="top:522px;height:15px;left:1115px;">Tomáš Janvars</div><div class="c n" style="top:537px;height:15px;left:31px;">3.3.2013 10:18</div><div class="c " style="top:537px;height:15px;left:139px;">Jasovská (Bratislava-Petržalka)</div><div class="c n" style="top:537px;height:15px;left:402px;width:52px;text-align:right;">6472</div><div class="c n" style="top:537px;height:15px;left:456px;width:50px;text-align:right;">4,2</div><div class="c n" style="top:537px;height:15px;left:508px;width:54px;text-align:right;">0:31</div><div class="c n" style="top:537px;height:15px;left:619px;">3.3.2013 10:49</div><div class="c " style="top:537px;height:15px;left:725px;">Švabinského (Bratislava-Petržalka)</div><div class="c " style="top:537px;height:15px;left:995px;">Služobná</div><div class="c " style="top:537px;height:15px;left:1115px;">Tomáš Janvars</div><div class="c n" style="top:552px;height:15px;left:31px;">3.3.2013 10:52</div><div class="c " style="top:552px;height:15px;left:139px;">Švabinského (Bratislava-Petržalka)</div><div class="c n" style="top:552px;height:15px;left:402px;width:52px;text-align:right;">6476</div><div class="c n" style="top:552px;height:15px;left:456px;width:50px;text-align:right;">5,6</div><div class="c n" style="top:552px;height:15px;left:508px;width:54px;text-align:right;">0:06</div><div class="c n" style="top:552px;height:15px;left:619px;">3.3.2013 10:58</div><div class="c " style="top:552px;height:15px;left:725px;">Košická (Bratislava)</div><div class="c " style="top:552px;height:15px;left:995px;">Služobná</div><div class="c " style="top:552px;height:15px;left:1115px;">Tomáš Janvars</div><div class="c n" style="top:567px;height:15px;left:31px;">3.3.2013 11:02</div><div class="c " style="top:567px;height:15px;left:139px;">Košická (Bratislava)</div><div class="c n" style="top:567px;height:15px;left:402px;width:52px;text-align:right;">6482</div><div class="c n" style="top:567px;height:15px;left:456px;width:50px;text-align:right;">184,3</div><div class="c n" style="top:567px;height:15px;left:508px;width:54px;text-align:right;">2:00</div><div class="c n" style="top:567px;height:15px;left:619px;">3.3.2013 13:02</div><div class="c " style="top:567px;height:15px;left:725px;">Bojnice (Prievidza)</div><div class="c " style="top:567px;height:15px;left:995px;">Služobná</div><div class="c " style="top:567px;height:15px;left:1115px;">Tomáš Janvars</div><div class="c n" style="top:582px;height:15px;left:31px;">3.3.2013 15:39</div><div class="c " style="top:582px;height:15px;left:139px;">Bojnice (Prievidza)</div><div class="c n" style="top:582px;height:15px;left:402px;width:52px;text-align:right;">6666</div><div class="c n" style="top:582px;height:15px;left:456px;width:50px;text-align:right;">3,5</div><div class="c n" style="top:582px;height:15px;left:508px;width:54px;text-align:right;">0:07</div><div class="c n" style="top:582px;height:15px;left:619px;">3.3.2013 15:46</div><div class="c " style="top:582px;height:15px;left:725px;">Prievidza</div><div class="c " style="top:582px;height:15px;left:995px;">Služobná</div><div class="c " style="top:582px;height:15px;left:1115px;">Tomáš Janvars</div><div class="c n" style="top:597px;height:15px;left:31px;">3.3.2013 17:35</div><div class="c " style="top:597px;height:15px;left:139px;">Prievidza</div><div class="c n" style="top:597px;height:15px;left:402px;width:52px;text-align:right;">6670</div><div class="c n" style="top:597px;height:15px;left:456px;width:50px;text-align:right;">185,6</div><div class="c n" style="top:597px;height:15px;left:508px;width:54px;text-align:right;">1:59</div><div class="c n" style="top:597px;height:15px;left:619px;">3.3.2013 19:34</div><div class="c " style="top:597px;height:15px;left:725px;">Jasovská (Bratislava-Petržalka)</div><div class="c " style="top:597px;height:15px;left:995px;">Služobná</div><div class="c " style="top:597px;height:15px;left:1115px;">Tomáš Janvars</div><div class="c n" style="top:612px;height:15px;left:31px;">3.3.2013 19:57</div><div class="c " style="top:612px;height:15px;left:139px;">Jasovská (Bratislava-Petržalka)</div><div class="c n" style="top:612px;height:15px;left:402px;width:52px;text-align:right;">6855</div><div class="c n" style="top:612px;height:15px;left:456px;width:50px;text-align:right;">8,7</div><div class="c n" style="top:612px;height:15px;left:508px;width:54px;text-align:right;">0:11</div><div class="c n" style="top:612px;height:15px;left:619px;">3.3.2013 20:08</div><div class="c " style="top:612px;height:15px;left:725px;">Sklenárova (Bratislava-Ružinov)</div><div class="c " style="top:612px;height:15px;left:995px;">Služobná</div><div class="c " style="top:612px;height:15px;left:1115px;">Tomáš Janvars</div><div class="c n" style="top:627px;height:15px;left:31px;">3.3.2013 21:57</div><div class="c " style="top:627px;height:15px;left:139px;">Sklenárova (Bratislava-Ružinov)</div><div class="c n" style="top:627px;height:15px;left:402px;width:52px;text-align:right;">6864</div><div class="c n" style="top:627px;height:15px;left:456px;width:50px;text-align:right;">8,1</div><div class="c n" style="top:627px;height:15px;left:508px;width:54px;text-align:right;">0:08</div><div class="c n" style="top:627px;height:15px;left:619px;">3.3.2013 22:05</div><div class="c " style="top:627px;height:15px;left:725px;">Humenské námestie (Bratislava-Petržalka)</div><div class="c " style="top:627px;height:15px;left:995px;">Služobná</div><div class="c " style="top:627px;height:15px;left:1115px;">Tomáš Janvars</div><div class="c n" style="top:642px;height:15px;left:31px;">4.3.2013 7:20</div><div class="c " style="top:642px;height:15px;left:139px;">Humenské námestie (Bratislava-Petržalka)</div><div class="c n" style="top:642px;height:15px;left:402px;width:52px;text-align:right;">6872</div><div class="c n" style="top:642px;height:15px;left:456px;width:50px;text-align:right;">5,9</div><div class="c n" style="top:642px;height:15px;left:508px;width:54px;text-align:right;">0:08</div><div class="c n" style="top:642px;height:15px;left:619px;">4.3.2013 7:28</div><div class="c " style="top:642px;height:15px;left:725px;">Bratislava-Petržalka</div><div class="c " style="top:642px;height:15px;left:995px;">Služobná</div><div class="c " style="top:642px;height:15px;left:1115px;">Tomáš Janvars</div><div class="c n" style="top:657px;height:15px;left:31px;">4.3.2013 15:15</div><div class="c " style="top:657px;height:15px;left:139px;">Bratislava-Petržalka</div><div class="c n" style="top:657px;height:15px;left:402px;width:52px;text-align:right;">6878</div><div class="c n" style="top:657px;height:15px;left:456px;width:50px;text-align:right;">150,4</div><div class="c n" style="top:657px;height:15px;left:508px;width:54px;text-align:right;">1:44</div><div class="c n" style="top:657px;height:15px;left:619px;">4.3.2013 16:59</div><div class="c " style="top:657px;height:15px;left:725px;">Levice</div><div class="c " style="top:657px;height:15px;left:995px;">Služobná</div><div class="c " style="top:657px;height:15px;left:1115px;">Tomáš Janvars</div><div class="c n" style="top:672px;height:15px;left:31px;">4.3.2013 20:12</div><div class="c " style="top:672px;height:15px;left:139px;">Levice</div><div class="c n" style="top:672px;height:15px;left:402px;width:52px;text-align:right;">7028</div><div class="c n" style="top:672px;height:15px;left:456px;width:50px;text-align:right;">1,9</div><div class="c n" style="top:672px;height:15px;left:508px;width:54px;text-align:right;">0:03</div><div class="c n" style="top:672px;height:15px;left:619px;">4.3.2013 20:15</div><div class="c " style="top:672px;height:15px;left:725px;">Levice</div><div class="c " style="top:672px;height:15px;left:995px;">Služobná</div><div class="c " style="top:672px;height:15px;left:1115px;">Tomáš Janvars</div><div class="c n" style="top:687px;height:15px;left:31px;">4.3.2013 20:18</div><div class="c " style="top:687px;height:15px;left:139px;">Levice</div><div class="c n" style="top:687px;height:15px;left:402px;width:52px;text-align:right;">7030</div><div class="c n" style="top:687px;height:15px;left:456px;width:50px;text-align:right;">138,2</div><div class="c n" style="top:687px;height:15px;left:508px;width:54px;text-align:right;">1:28</div><div class="c n" style="top:687px;height:15px;left:619px;">4.3.2013 21:46</div><div class="c " style="top:687px;height:15px;left:725px;">Humenské námestie (Bratislava-Petržalka)</div><div class="c " style="top:687px;height:15px;left:995px;">Služobná</div><div class="c " style="top:687px;height:15px;left:1115px;">Tomáš Janvars</div><div class="c n" style="top:702px;height:15px;left:31px;">5.3.2013 7:24</div><div class="c " style="top:702px;height:15px;left:139px;">Humenské námestie (Bratislava-Petržalka)</div><div class="c n" style="top:702px;height:15px;left:402px;width:52px;text-align:right;">7168</div><div class="c n" style="top:702px;height:15px;left:456px;width:50px;text-align:right;">7,6</div><div class="c n" style="top:702px;height:15px;left:508px;width:54px;text-align:right;">0:12</div><div class="c n" style="top:702px;height:15px;left:619px;">5.3.2013 7:36</div><div class="c " style="top:702px;height:15px;left:725px;">Trenčanska (Bratislava-Ružinov)</div><div class="c " style="top:702px;height:15px;left:995px;">Služobná</div><div class="c " style="top:702px;height:15px;left:1115px;">Tomáš Janvars</div><div class="c n" style="top:717px;height:15px;left:31px;">5.3.2013 9:02</div><div class="c " style="top:717px;height:15px;left:139px;">Trenčanska (Bratislava-Ružinov)</div><div class="c n" style="top:717px;height:15px;left:402px;width:52px;text-align:right;">7176</div><div class="c n" style="top:717px;height:15px;left:456px;width:50px;text-align:right;">6,2</div><div class="c n" style="top:717px;height:15px;left:508px;width:54px;text-align:right;">0:10</div><div class="c n" style="top:717px;height:15px;left:619px;">5.3.2013 9:12</div><div class="c " style="top:717px;height:15px;left:725px;">Bratislava-Petržalka</div><div class="c " style="top:717px;height:15px;left:995px;">Služobná</div><div class="c " style="top:717px;height:15px;left:1115px;">Tomáš Janvars</div><div class="c n" style="top:732px;height:15px;left:31px;">5.3.2013 11:16</div><div class="c " style="top:732px;height:15px;left:139px;">Bratislava-Petržalka</div><div class="c n" style="top:732px;height:15px;left:402px;width:52px;text-align:right;">7182</div><div class="c n" style="top:732px;height:15px;left:456px;width:50px;text-align:right;">0,3</div><div class="c n" style="top:732px;height:15px;left:508px;width:54px;text-align:right;">0:01</div><div class="c n" style="top:732px;height:15px;left:619px;">5.3.2013 11:17</div><div class="c " style="top:732px;height:15px;left:725px;">Bratislava-Petržalka</div><div class="c " style="top:732px;height:15px;left:995px;">Služobná</div><div class="c n" style="top:747px;height:15px;left:31px;">5.3.2013 16:37</div><div class="c " style="top:747px;height:15px;left:139px;">Bratislava-Petržalka</div><div class="c n" style="top:747px;height:15px;left:402px;width:52px;text-align:right;">7183</div><div class="c n" style="top:747px;height:15px;left:456px;width:50px;text-align:right;">10,0</div><div class="c n" style="top:747px;height:15px;left:508px;width:54px;text-align:right;">0:13</div><div class="c n" style="top:747px;height:15px;left:619px;">5.3.2013 16:50</div><div class="c " style="top:747px;height:15px;left:725px;">Heyrovského (Bratislava-Lamač)</div><div class="c " style="top:747px;height:15px;left:995px;">Služobná</div><div class="c " style="top:747px;height:15px;left:1115px;">Tomáš Janvars</div><div class="c n" style="top:762px;height:15px;left:31px;">5.3.2013 16:55</div><div class="c " style="top:762px;height:15px;left:139px;">Heyrovského (Bratislava-Lamač)</div><div class="c n" style="top:762px;height:15px;left:402px;width:52px;text-align:right;">7193</div><div class="c n" style="top:762px;height:15px;left:456px;width:50px;text-align:right;">16,1</div><div class="c n" style="top:762px;height:15px;left:508px;width:54px;text-align:right;">0:15</div><div class="c n" style="top:762px;height:15px;left:619px;">5.3.2013 17:10</div><div class="c " style="top:762px;height:15px;left:725px;">Jasovská (Bratislava-Petržalka)</div><div class="c " style="top:762px;height:15px;left:995px;">Služobná</div><div class="c " style="top:762px;height:15px;left:1115px;">Tomáš Janvars</div><div class="c n" style="top:777px;height:15px;left:31px;">5.3.2013 17:16</div><div class="c " style="top:777px;height:15px;left:139px;">Jasovská (Bratislava-Petržalka)</div><div class="c n" style="top:777px;height:15px;left:402px;width:52px;text-align:right;">7209</div><div class="c n" style="top:777px;height:15px;left:456px;width:50px;text-align:right;">17,5</div><div class="c n" style="top:777px;height:15px;left:508px;width:54px;text-align:right;">0:23</div><div class="c n" style="top:777px;height:15px;left:619px;">5.3.2013 17:39</div><div class="c " style="top:777px;height:15px;left:725px;">Hainburg an der Donau (Lower Austria)</div><div class="c " style="top:777px;height:15px;left:995px;">Služobná</div><div class="c " style="top:777px;height:15px;left:1115px;">Tomáš Janvars</div><div class="c n" style="top:792px;height:15px;left:31px;">5.3.2013 17:48</div><div class="c " style="top:792px;height:15px;left:139px;">Hainburg an der Donau (Lower Austria)</div><div class="c n" style="top:792px;height:15px;left:402px;width:52px;text-align:right;">7226</div><div class="c n" style="top:792px;height:15px;left:456px;width:50px;text-align:right;">0,8</div><div class="c n" style="top:792px;height:15px;left:508px;width:54px;text-align:right;">0:02</div><div class="c n" style="top:792px;height:15px;left:619px;">5.3.2013 17:50</div><div class="c " style="top:792px;height:15px;left:725px;">Hainburg an der Donau (Lower Austria)</div><div class="c " style="top:792px;height:15px;left:995px;">Služobná</div><div class="c " style="top:792px;height:15px;left:1115px;">Tomáš Janvars</div><div class="c n" style="top:807px;height:15px;left:31px;">5.3.2013 17:53</div><div class="c " style="top:807px;height:15px;left:139px;">Hainburg an der Donau (Lower Austria)</div><div class="c n" style="top:807px;height:15px;left:402px;width:52px;text-align:right;">7227</div><div class="c n" style="top:807px;height:15px;left:456px;width:50px;text-align:right;">18,6</div><div class="c n" style="top:807px;height:15px;left:508px;width:54px;text-align:right;">0:21</div><div class="c n" style="top:807px;height:15px;left:619px;">5.3.2013 18:14</div><div class="c " style="top:807px;height:15px;left:725px;">Jasovská (Bratislava-Petržalka)</div><div class="c " style="top:807px;height:15px;left:995px;">Služobná</div><div class="c " style="top:807px;height:15px;left:1115px;">Tomáš Janvars</div><div class="c n" style="top:822px;height:15px;left:31px;">6.3.2013 7:59</div><div class="c " style="top:822px;height:15px;left:139px;">Jasovská (Bratislava-Petržalka)</div><div class="c n" style="top:822px;height:15px;left:402px;width:52px;text-align:right;">7246</div><div class="c n" style="top:822px;height:15px;left:456px;width:50px;text-align:right;">51,9</div><div class="c n" style="top:822px;height:15px;left:508px;width:54px;text-align:right;">0:46</div><div class="c n" style="top:822px;height:15px;left:619px;">6.3.2013 8:45</div><div class="c " style="top:822px;height:15px;left:725px;">Bratislava-Petržalka</div><div class="c " style="top:822px;height:15px;left:995px;">Služobná</div><div class="c " style="top:822px;height:15px;left:1115px;">Tomáš Janvars</div><div class="c n" style="top:837px;height:15px;left:31px;">6.3.2013 10:51</div><div class="c " style="top:837px;height:15px;left:139px;">Bratislava-Petržalka</div><div class="c n" style="top:837px;height:15px;left:402px;width:52px;text-align:right;">7297</div><div class="c n" style="top:837px;height:15px;left:456px;width:50px;text-align:right;">0,3</div><div class="c n" style="top:837px;height:15px;left:508px;width:54px;text-align:right;">0:05</div><div class="c n" style="top:837px;height:15px;left:619px;">6.3.2013 10:56</div><div class="c " style="top:837px;height:15px;left:725px;">Bratislava-Petržalka</div><div class="c " style="top:837px;height:15px;left:995px;">Služobná</div><div class="c " style="top:837px;height:15px;left:1115px;">Tomáš Janvars</div><div class="c n" style="top:852px;height:15px;left:31px;">6.3.2013 16:50</div><div class="c " style="top:852px;height:15px;left:139px;">Bratislava-Petržalka</div><div class="c n" style="top:852px;height:15px;left:402px;width:52px;text-align:right;">7299</div><div class="c n" style="top:852px;height:15px;left:456px;width:50px;text-align:right;">22,7</div><div class="c n" style="top:852px;height:15px;left:508px;width:54px;text-align:right;">0:21</div><div class="c n" style="top:852px;height:15px;left:619px;">6.3.2013 17:30</div><div class="c " style="top:852px;height:15px;left:725px;">Stupava (Malacky)</div><div class="c " style="top:852px;height:15px;left:995px;">Služobná</div><div class="c " style="top:852px;height:15px;left:1115px;">Tomáš Janvars</div>
<div class="selbox" style="left:720px;top:476px;width:267px;height:12px"></div><div class="a" style="left:986px;top:488px;width:5px;height:5px;background:#000;border:1px solid #fff"></div>
</div>
<div id="colhdr"><div class="corner"></div><div class="ch" style="left:28px;width:107px">A</div><div class="ch" style="left:136px;width:265px">B</div><div class="ch" style="left:402px;width:53px">C</div><div class="ch" style="left:456px;width:51px">D</div><div class="ch" style="left:508px;width:55px">E</div><div class="ch" style="left:564px;width:51px">F</div><div class="ch" style="left:616px;width:105px">G</div><div class="ch sel" style="left:722px;width:269px">H</div><div class="ch" style="left:992px;width:119px">I</div><div class="ch" style="left:1112px;width:117px">J</div><div class="ch" style="left:1230px;width:267px">K</div><div class="ch" style="left:1498px;width:63px">L</div><div class="ch" style="left:1562px;width:39px"></div></div>
<div id="rowhdr"><div class="rh" style="top:176px;height:26px;line-height:15px;padding-top:9px;box-sizing:border-box;height:27px">1</div><div class="rh" style="top:203px;height:14px;line-height:15px;padding-top:1px;box-sizing:border-box;height:15px">2</div><div class="rh" style="top:218px;height:14px;line-height:15px;padding-top:1px;box-sizing:border-box;height:15px">3</div><div class="rh" style="top:233px;height:14px;line-height:15px;padding-top:1px;box-sizing:border-box;height:15px">4</div><div class="rh" style="top:248px;height:14px;line-height:15px;padding-top:1px;box-sizing:border-box;height:15px">5</div><div class="rh" style="top:263px;height:14px;line-height:15px;padding-top:1px;box-sizing:border-box;height:15px">6</div><div class="rh" style="top:278px;height:14px;line-height:15px;padding-top:1px;box-sizing:border-box;height:15px">7</div><div class="rh" style="top:293px;height:14px;line-height:15px;padding-top:1px;box-sizing:border-box;height:15px">8</div><div class="rh" style="top:308px;height:14px;line-height:15px;padding-top:1px;box-sizing:border-box;height:15px">9</div><div class="rh" style="top:323px;height:14px;line-height:15px;padding-top:1px;box-sizing:border-box;height:15px">10</div><div class="rh" style="top:338px;height:14px;line-height:15px;padding-top:1px;box-sizing:border-box;height:15px">11</div><div class="rh" style="top:353px;height:14px;line-height:15px;padding-top:1px;box-sizing:border-box;height:15px">12</div><div class="rh" style="top:368px;height:14px;line-height:15px;padding-top:1px;box-sizing:border-box;height:15px">13</div><div class="rh" style="top:383px;height:16px;line-height:15px;padding-top:2px;box-sizing:border-box;height:17px">14</div><div class="rh" style="top:400px;height:16px;line-height:15px;padding-top:2px;box-sizing:border-box;height:17px">15</div><div class="rh" style="top:417px;height:14px;line-height:15px;padding-top:1px;box-sizing:border-box;height:15px">16</div><div class="rh" style="top:432px;height:14px;line-height:15px;padding-top:1px;box-sizing:border-box;height:15px">17</div><div class="rh" style="top:447px;height:14px;line-height:15px;padding-top:1px;box-sizing:border-box;height:15px">18</div><div class="rh" style="top:462px;height:14px;line-height:15px;padding-top:1px;box-sizing:border-box;height:15px">19</div><div class="rh sel" style="top:477px;height:14px;line-height:15px;padding-top:1px;box-sizing:border-box;height:15px">20</div><div class="rh" style="top:492px;height:14px;line-height:15px;padding-top:1px;box-sizing:border-box;height:15px">21</div><div class="rh" style="top:507px;height:14px;line-height:15px;padding-top:1px;box-sizing:border-box;height:15px">22</div><div class="rh" style="top:522px;height:14px;line-height:15px;padding-top:1px;box-sizing:border-box;height:15px">23</div><div class="rh" style="top:537px;height:14px;line-height:15px;padding-top:1px;box-sizing:border-box;height:15px">24</div><div class="rh" style="top:552px;height:14px;line-height:15px;padding-top:1px;box-sizing:border-box;height:15px">25</div><div class="rh" style="top:567px;height:14px;line-height:15px;padding-top:1px;box-sizing:border-box;height:15px">26</div><div class="rh" style="top:582px;height:14px;line-height:15px;padding-top:1px;box-sizing:border-box;height:15px">27</div><div class="rh" style="top:597px;height:14px;line-height:15px;padding-top:1px;box-sizing:border-box;height:15px">28</div><div class="rh" style="top:612px;height:14px;line-height:15px;padding-top:1px;box-sizing:border-box;height:15px">29</div><div class="rh" style="top:627px;height:14px;line-height:15px;padding-top:1px;box-sizing:border-box;height:15px">30</div><div class="rh" style="top:642px;height:14px;line-height:15px;padding-top:1px;box-sizing:border-box;height:15px">31</div><div class="rh" style="top:657px;height:14px;line-height:15px;padding-top:1px;box-sizing:border-box;height:15px">32</div><div class="rh" style="top:672px;height:14px;line-height:15px;padding-top:1px;box-sizing:border-box;height:15px">33</div><div class="rh" style="top:687px;height:14px;line-height:15px;padding-top:1px;box-sizing:border-box;height:15px">34</div><div class="rh" style="top:702px;height:14px;line-height:15px;padding-top:1px;box-sizing:border-box;height:15px">35</div><div class="rh" style="top:717px;height:14px;line-height:15px;padding-top:1px;box-sizing:border-box;height:15px">36</div><div class="rh" style="top:732px;height:14px;line-height:15px;padding-top:1px;box-sizing:border-box;height:15px">37</div><div class="rh" style="top:747px;height:14px;line-height:15px;padding-top:1px;box-sizing:border-box;height:15px">38</div><div class="rh" style="top:762px;height:14px;line-height:15px;padding-top:1px;box-sizing:border-box;height:15px">39</div><div class="rh" style="top:777px;height:14px;line-height:15px;padding-top:1px;box-sizing:border-box;height:15px">40</div><div class="rh" style="top:792px;height:14px;line-height:15px;padding-top:1px;box-sizing:border-box;height:15px">41</div><div class="rh" style="top:807px;height:14px;line-height:15px;padding-top:1px;box-sizing:border-box;height:15px">42</div><div class="rh" style="top:822px;height:14px;line-height:15px;padding-top:1px;box-sizing:border-box;height:15px">43</div><div class="rh" style="top:837px;height:14px;line-height:15px;padding-top:1px;box-sizing:border-box;height:15px">44</div><div class="rh" style="top:852px;height:14px;line-height:15px;padding-top:1px;box-sizing:border-box;height:15px">45</div><div class="rh" style="top:867px;height:14px;line-height:15px;padding-top:1px;box-sizing:border-box;height:15px">46</div></div>
</div>
<div id="vscroll">
  <div class="a" style="left:0;top:0;width:14px;height:10px;background:linear-gradient(#fafbfc,#e3e7ec);border:1px solid #a9b0b8;box-sizing:border-box;border-radius:2px"></div>
  <div class="a" style="left:3px;top:14px;width:0;height:0;border-left:4px solid transparent;border-right:4px solid transparent;border-bottom:5px solid #222"></div>
  <div class="a" style="left:0;top:25px;width:14px;height:231px;background:linear-gradient(90deg,#f7f8fa,#e9ecf0);border:1px solid #aeb5be;box-sizing:border-box;border-radius:2px"></div>
  <div class="a" style="left:4px;top:136px;width:6px;height:8px;background:repeating-linear-gradient(#8a919a 0,#8a919a 1px,transparent 1px,transparent 2px)"></div>
  <div class="a" style="left:3px;top:690px;width:0;height:0;border-left:4px solid transparent;border-right:4px solid transparent;border-top:5px solid #222"></div>
</div>
<div id="tabbar">
  <div class="a" style="left:6px;top:3px;width:1px;height:8px;background:#333"></div>
  <div class="a" style="left:7px;top:3px;width:0;height:0;border-top:4px solid transparent;border-bottom:4px solid transparent;border-right:5px solid #333"></div>
  <div class="a" style="left:21px;top:3px;width:0;height:0;border-top:4px solid transparent;border-bottom:4px solid transparent;border-right:5px solid #333"></div>
  <div class="a" style="left:35px;top:3px;width:0;height:0;border-top:4px solid transparent;border-bottom:4px solid transparent;border-left:5px solid #333"></div>
  <div class="a" style="left:49px;top:3px;width:0;height:0;border-top:4px solid transparent;border-bottom:4px solid transparent;border-left:5px solid #333"></div>
  <div class="a" style="left:54px;top:3px;width:1px;height:8px;background:#333"></div>
  <div class="a" style="left:62px;top:0;width:890px;height:13px;background:linear-gradient(#f3f5f7,#e9ecef)"></div><div class="a" style="left:62px;top:13px;width:890px;height:1px;background:#b9c0c8"></div><div class="a" style="left:62px;top:0;width:1px;height:14px;background:#c5cad1"></div>
  <div class="st" style="left:78px">Citroen Berlingo</div>
  <div class="a" style="left:176px;top:0;width:2px;height:15px;background:#aab1ba;transform:skewX(-38deg)"></div><div class="a" style="left:170px;top:0;width:1px;height:15px;background:#cfd4da;transform:skewX(38deg)"></div>
  <div class="st" style="left:191px">Geofencing Level</div>
  <div class="a" style="left:296px;top:0;width:2px;height:15px;background:#aab1ba;transform:skewX(-38deg)"></div><div class="a" style="left:290px;top:0;width:1px;height:15px;background:#cfd4da;transform:skewX(38deg)"></div>
  <div class="st" style="left:310px">Nissan Primera</div>
  <div class="a" style="left:400px;top:0;width:2px;height:15px;background:#aab1ba;transform:skewX(-38deg)"></div><div class="a" style="left:394px;top:0;width:1px;height:15px;background:#cfd4da;transform:skewX(38deg)"></div>
  <div class="a" style="left:518px;top:-1px;width:134px;height:15px;background:#fff;border:1px solid #b8bec6;border-top:none;box-sizing:border-box"></div>
  <div class="st" style="left:415px">Personal Tracker</div>
  <div class="st" style="left:531px;color:#111;font-weight:bold;font-size:12px">Personal Tracker 2</div>
  <div class="a" style="left:651px;top:0;width:2px;height:15px;background:#aab1ba;transform:skewX(-38deg)"></div><div class="a" style="left:645px;top:0;width:1px;height:15px;background:#cfd4da;transform:skewX(38deg)"></div>
  <div class="st" style="left:665px">Subaru Forester</div>
  <div class="a" style="left:762px;top:0;width:2px;height:15px;background:#aab1ba;transform:skewX(-38deg)"></div><div class="a" style="left:756px;top:0;width:1px;height:15px;background:#cfd4da;transform:skewX(38deg)"></div>
  <div class="st" style="left:777px;letter-spacing:.5px">Test_2_MT</div>
  <div class="a" style="left:848px;top:0;width:2px;height:15px;background:#aab1ba;transform:skewX(-38deg)"></div><div class="a" style="left:842px;top:0;width:1px;height:15px;background:#cfd4da;transform:skewX(38deg)"></div>
  <div class="st" style="left:861px;letter-spacing:.5px">Test_3_MT</div>
  <div class="a" style="left:932px;top:0;width:2px;height:15px;background:#aab1ba;transform:skewX(-38deg)"></div><div class="a" style="left:926px;top:0;width:1px;height:15px;background:#cfd4da;transform:skewX(38deg)"></div>
  <div class="a" style="left:942px;top:2px;width:8px;height:9px;background:#f5d480;border:1px solid #c99b3a;box-sizing:border-box"></div>
  <div class="a" style="left:957px;top:1px;width:4px;height:12px;border:1px solid #a9b0b8;background:#fff"></div>
  <div class="a" style="left:965px;top:3px;width:0;height:0;border-top:4px solid transparent;border-bottom:4px solid transparent;border-right:5px solid #333"></div>
  <div class="a" style="left:977px;top:1px;width:535px;height:12px;background:linear-gradient(#fbfcfd,#e7eaee);border:1px solid #aeb5be;box-sizing:border-box;border-radius:2px"></div>
  <div class="a" style="left:1242px;top:4px;width:8px;height:6px;background:repeating-linear-gradient(90deg,#8a919a 0,#8a919a 1px,transparent 1px,transparent 2px)"></div>
  <div class="a" style="left:1512px;top:1px;width:58px;height:12px;background:#dfe4ea"></div>
  <div class="a" style="left:1570px;top:3px;width:0;height:0;border-top:4px solid transparent;border-bottom:4px solid transparent;border-left:5px solid #333"></div>
  <div class="a" style="left:1580px;top:1px;width:6px;height:12px;border:1px solid #a9b0b8;background:#fff;border-radius:2px"></div>
</div>
<div id="status">
  <div class="t" style="left:8px;top:4px;color:#333">Ready</div>
  <div class="a" style="left:48px;top:2px;width:1px;height:19px;background:#b8bec6"></div>
  <div class="a" style="left:1366px;top:2px;width:19px;height:18px;background:linear-gradient(#fde9a8,#f7cd59);border:1px solid #d8a936;box-sizing:border-box"></div>
  <div class="a" style="left:1370px;top:6px;width:10px;height:9px;background:repeating-linear-gradient(90deg,#555 0,#555 1px,transparent 1px,transparent 3px)"></div>
  <div class="a" style="left:1389px;top:5px;width:14px;height:11px;border:1px solid #666;box-sizing:border-box;background:#fff"></div>
  <div class="a" style="left:1393px;top:8px;width:6px;height:5px;background:#777"></div>
  <div class="a" style="left:1407px;top:5px;width:14px;height:11px;border:1px solid #666;box-sizing:border-box;background:repeating-linear-gradient(90deg,#fff 0,#fff 3px,#999 3px,#999 4px)"></div>
  <div class="t" style="left:1432px;top:4px;color:#333">100%</div>
  <div class="a" style="left:1466px;top:3px;width:17px;height:17px;border-radius:50%;border:1px solid #777;box-sizing:border-box;background:radial-gradient(#fff,#e5e8ec)"></div>
  <div class="a" style="left:1470px;top:11px;width:9px;height:2px;background:#333"></div>
  <div class="a" style="left:1490px;top:11px;width:82px;height:1px;background:#9aa1aa"></div>
  <div class="a" style="left:1526px;top:4px;width:10px;height:12px;background:linear-gradient(#fff,#dde1e6);border:1px solid #777;box-sizing:border-box;border-radius:2px 2px 5px 5px"></div>
  <div class="a" style="left:1580px;top:3px;width:17px;height:17px;border-radius:50%;border:1px solid #777;box-sizing:border-box;background:radial-gradient(#fff,#e5e8ec)"></div>
  <div class="a" style="left:1584px;top:11px;width:9px;height:2px;background:#333"></div>
  <div class="a" style="left:1588px;top:7px;width:2px;height:9px;background:#333"></div>
</div>

</div></body></html>
